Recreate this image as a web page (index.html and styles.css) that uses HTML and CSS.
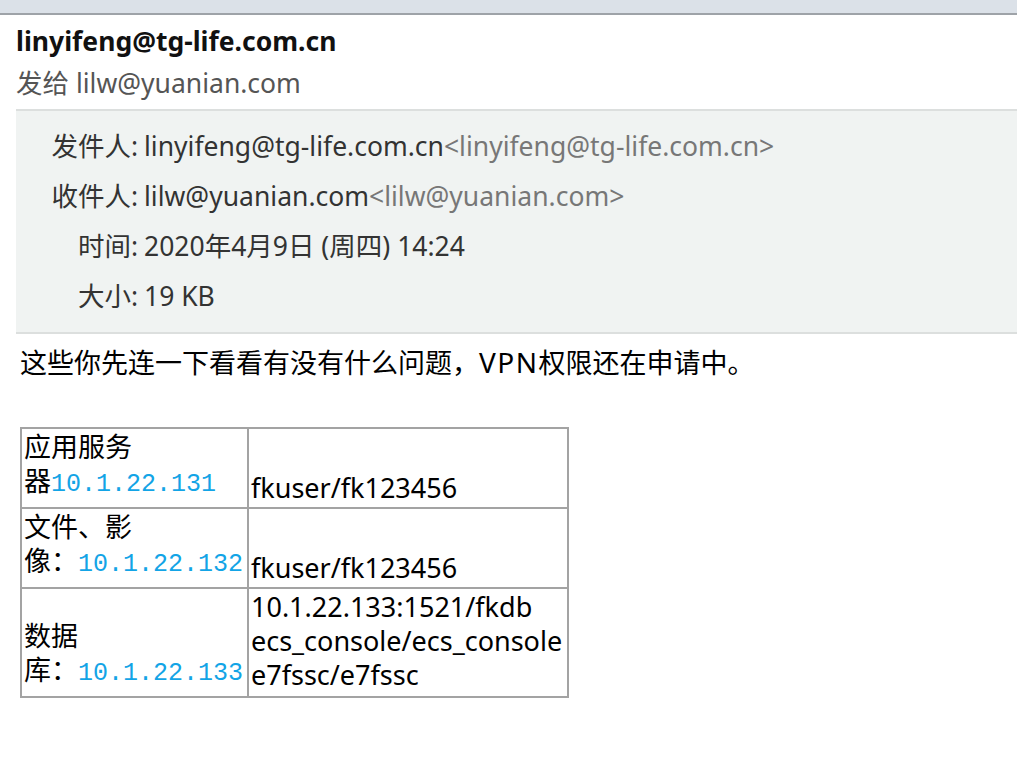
FILE: index.html
```html
<!DOCTYPE html>
<html lang="zh-CN">
<head>
<meta charset="utf-8">
<title>邮件</title>
<link rel="stylesheet" href="styles.css">
</head>
<body>
<div class="topbar"></div>
<div class="header">
  <div class="sender">linyifeng@tg-life.com.cn</div>
  <div class="to">发给 lilw@yuanian.com</div>
</div>
<div class="meta">
  <div class="row"><span class="label">发件人:</span><span class="value">linyifeng@tg-life.com.cn<span class="addr">&lt;linyifeng@tg-life.com.cn&gt;</span></span></div>
  <div class="row"><span class="label">收件人:</span><span class="value">lilw@yuanian.com<span class="addr">&lt;lilw@yuanian.com&gt;</span></span></div>
  <div class="row"><span class="label">时间:</span><span class="value">2020年4月9日 (周四) 14:24</span></div>
  <div class="row"><span class="label">大小:</span><span class="value">19 KB</span></div>
</div>
<div class="content">
  <p class="msg">这些你先连一下看看有没有什么问题，<span class="latin">VPN</span>权限还在申请中。</p>
  <table class="info">
    <tr>
      <td class="c1">应用服务<br>器<span class="ip">10.1.22.131</span></td>
      <td class="c2">fkuser/fk123456</td>
    </tr>
    <tr>
      <td class="c1">文件、影<br>像：<span class="ip">10.1.22.132</span></td>
      <td class="c2">fkuser/fk123456</td>
    </tr>
    <tr>
      <td class="c1">数据<br>库：<span class="ip">10.1.22.133</span></td>
      <td class="c2 multi">10.1.22.133:1521/fkdb<br>ecs_console/ecs_console<br>e7fssc/e7fssc</td>
    </tr>
  </table>
</div>
</body>
</html>
```
FILE: styles.css
```css
html, body {
  margin: 0;
  padding: 0;
  background: #ffffff;
}
body {
  font-family: "Noto Sans", "Noto Sans CJK SC", sans-serif;
  font-size: 26.5px;
  color: #222;
}
.topbar {
  height: 13px;
  background: #dbe1e8;
  border-bottom: 2px solid #9ea3a8;
}
.header {
  padding: 9px 0 1px 16px;
}
.sender {
  font-weight: bold;
  color: #111;
  line-height: 34px;
}
.to {
  color: #555;
  line-height: 50px;
}
.meta {
  margin-left: 16px;
  background: #f0f3f2;
  border-top: 2px solid #dcdfde;
  border-bottom: 2px solid #dcdfde;
  padding: 10px 0 11px 0;
}
.row {
  display: flex;
  line-height: 50px;
  color: #333;
}
.label {
  width: 122px;
  text-align: right;
  flex: none;
}
.value {
  padding-left: 6px;
}
.addr {
  color: #777;
}
.content {
  padding-left: 20px;
}
.msg {
  margin: 0;
  padding-top: 11px;
  font-size: 27px;
  line-height: 34px;
  color: #000;
}
.latin {
  font-size: 28px;
  letter-spacing: 1.5px;
}
.info {
  margin-top: 47px;
  border-collapse: collapse;
  font-size: 27px;
  color: #000;
}
.info td {
  border: 2px solid #a3a3a3;
  padding: 1px 2px 2px 2px;
  vertical-align: bottom;
  line-height: 34px;
  white-space: nowrap;
}
.info td.multi {
  padding-bottom: 4px;
}
.c1 {
  width: 221px;
}
.c2 {
  width: 314px;
}
.ip {
  font-family: "Liberation Mono", monospace;
  font-size: 25px;
  line-height: 40px;
  color: #13a4e6;
}
```
